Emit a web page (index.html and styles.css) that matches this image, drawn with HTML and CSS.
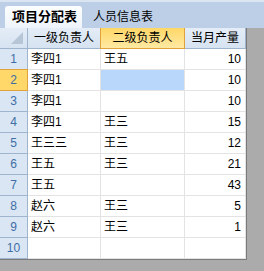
FILE: index.html
```html
<!DOCTYPE html>
<html lang="zh-CN">
<head>
  <meta charset="UTF-8" />
  <title>项目分配表</title>
  <link rel="stylesheet" href="styles.css">
</head>
<body>
  <!-- 工作表标签 -->
  <div class="tabs">
    <div class="tab active">项目分配表</div>
    <div class="tab">人员信息表</div>
  </div>

  <!-- 表格 -->
  <div class="sheet">
    <div class="row head">
      <div class="cell corner"><span class="tri"></span></div>
      <div class="cell c1">一级负责人</div>
      <div class="cell c2 sel">二级负责人</div>
      <div class="cell c3">当月产量</div>
    </div>
    <div class="row">
      <div class="cell rh">1</div>
      <div class="cell c1">李四1</div>
      <div class="cell c2">王五</div>
      <div class="cell c3 num">10</div>
    </div>
    <div class="row">
      <div class="cell rh sel">2</div>
      <div class="cell c1">李四1</div>
      <div class="cell c2 current"></div>
      <div class="cell c3 num">10</div>
    </div>
    <div class="row">
      <div class="cell rh">3</div>
      <div class="cell c1">李四1</div>
      <div class="cell c2"></div>
      <div class="cell c3 num">10</div>
    </div>
    <div class="row">
      <div class="cell rh">4</div>
      <div class="cell c1">李四1</div>
      <div class="cell c2">王三</div>
      <div class="cell c3 num">15</div>
    </div>
    <div class="row">
      <div class="cell rh">5</div>
      <div class="cell c1">王三三</div>
      <div class="cell c2">王三</div>
      <div class="cell c3 num">12</div>
    </div>
    <div class="row">
      <div class="cell rh">6</div>
      <div class="cell c1">王五</div>
      <div class="cell c2">王三</div>
      <div class="cell c3 num">21</div>
    </div>
    <div class="row">
      <div class="cell rh">7</div>
      <div class="cell c1">王五</div>
      <div class="cell c2"></div>
      <div class="cell c3 num">43</div>
    </div>
    <div class="row">
      <div class="cell rh">8</div>
      <div class="cell c1">赵六</div>
      <div class="cell c2">王三</div>
      <div class="cell c3 num">5</div>
    </div>
    <div class="row">
      <div class="cell rh">9</div>
      <div class="cell c1">赵六</div>
      <div class="cell c2">王三</div>
      <div class="cell c3 num">1</div>
    </div>
    <div class="row">
      <div class="cell rh">10</div>
      <div class="cell c1"></div>
      <div class="cell c2"></div>
      <div class="cell c3 num"></div>
    </div>
  </div>
</body>
</html>
```
FILE: styles.css
```css
* {
  box-sizing: border-box;
}

body {
  margin: 0;
  background: #ababab;
  font-family: "Liberation Sans", "Noto Sans CJK SC", sans-serif;
  font-size: 12px;
  color: #000;
}

.tabs {
  height: 28px;
  display: flex;
  align-items: flex-end;
  padding-left: 5px;
  background: #bccfe6;
  border-top: 2px solid #dbe5f1;
}

.tab {
  height: 22px;
  line-height: 22px;
  padding: 0 10px 0 8px;
  font-size: 12px;
  color: #000;
}

.tab.active {
  width: 77px;
  padding: 0 0 0 7px;
  font-size: 13px;
  font-weight: bold;
  background: linear-gradient(#fdfeff, #eef4fb);
  border-radius: 3px 3px 0 0;
  margin-right: 3px;
}

.sheet {
  width: 247px;
  background: #fff;
  border-right: 1px solid #7a7a7a;
  border-bottom: 1px solid #7a7a7a;
}

.row {
  display: flex;
  height: 21px;
}

.cell {
  height: 21px;
  line-height: 20px;
  padding: 0 3px;
  border-right: 1px solid #e3e3e3;
  border-bottom: 1px solid #e3e3e3;
  white-space: nowrap;
  overflow: hidden;
}

.c1 { width: 73px; }
.c2 { width: 84px; }
.c3 { width: 61px; }

.num {
  text-align: right;
  padding-right: 4px;
}

.head .cell {
  background: linear-gradient(#e4edf7, #d6e3f1);
  border-right-color: #9fb5cd;
  border-bottom-color: #9fb5cd;
  text-align: center;
  padding: 0;
}

.head .cell.sel {
  background: linear-gradient(#ffd766, #ffe9a3);
  border-right-color: #e0a23a;
  border-bottom-color: #e0a23a;
  box-shadow: -1px 0 0 #e0a23a;
}

.corner {
  position: relative;
  width: 28px;
}

.tri {
  position: absolute;
  right: 4px;
  bottom: 4px;
  width: 0;
  height: 0;
  border-left: 12px solid transparent;
  border-bottom: 12px solid #b6c6d7;
}

.rh {
  width: 28px;
  padding: 0;
  text-align: center;
  color: #3d6ea6;
  background: #dae6f3;
  border-right-color: #9fb5cd;
  border-bottom-color: #9fb5cd;
}

.rh.sel {
  background: #ffd869;
  border-right-color: #e0a23a;
  border-bottom-color: #e0a23a;
  box-shadow: 0 -1px 0 #e0a23a;
}

.current {
  background: #b8d7fb;
}
```
